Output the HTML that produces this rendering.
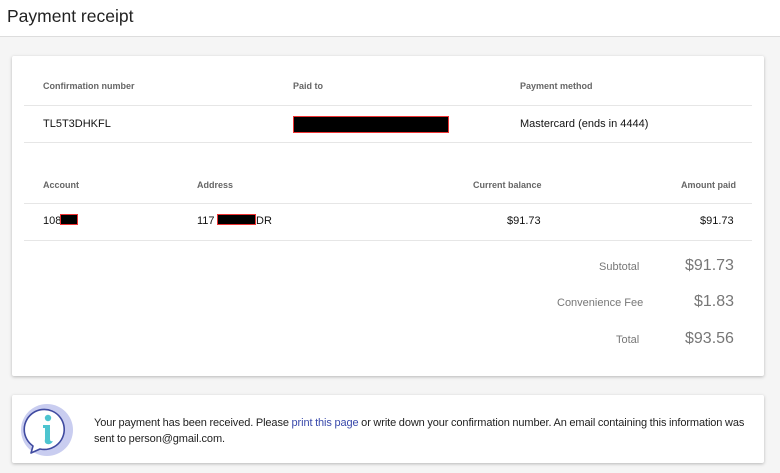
<!DOCTYPE html>
<html><head><style>
body{margin:0;width:780px;height:473px;background:#f5f5f5;font-family:"Liberation Sans",sans-serif;position:relative;overflow:hidden;color:#212121}
.hdr{position:absolute;left:0;top:0;width:780px;height:36px;background:#fff;border-bottom:1px solid #ddd}
.hdr span{position:absolute;left:7px;top:6px;font-size:17.5px;color:#222}
.card{position:absolute;left:12px;top:56px;width:752px;height:320px;background:#fff;box-shadow:0 1px 3px rgba(0,0,0,.25);border-radius:2px}
.t{position:absolute;white-space:nowrap}
.h{font-size:9px;font-weight:bold;color:#666}
.v{font-size:11px;color:#111}
.line{position:absolute;left:12px;width:728px;height:1px;background:#e6e6e6}
.red{position:absolute;background:#000;border:1px solid #e33}
.lbl{font-size:11px;color:#777}
.amt{font-size:16px;color:#777}
.info{position:absolute;left:12px;top:395px;width:752px;height:68px;background:#fff;box-shadow:0 1px 3px rgba(0,0,0,.25);border-radius:2px}
a{color:#3949ab;text-decoration:none}
</style></head><body>
<div class="hdr"><span>Payment receipt</span></div>
<div class="card">
<div class="t h" style="left:31px;top:25px">Confirmation number</div>
<div class="t h" style="left:281px;top:25px">Paid to</div>
<div class="t h" style="left:508px;top:25px">Payment method</div>
<div class="line" style="top:49px"></div>
<div class="t v" style="left:31px;top:62px">TL5T3DHKFL</div>
<div class="red" style="left:281px;top:60px;width:154px;height:15px"></div>
<div class="t v" style="left:508px;top:62px">Mastercard (ends in 4444)</div>
<div class="line" style="top:86px"></div>
<div class="t h" style="left:31px;top:124px">Account</div>
<div class="t h" style="left:185px;top:124px">Address</div>
<div class="t h" style="left:461px;top:124px">Current balance</div>
<div class="t h" style="left:669px;top:124px">Amount paid</div>
<div class="line" style="top:147px"></div>
<div class="t v" style="left:31px;top:159px">108</div>
<div class="red" style="left:48px;top:158px;width:16px;height:9px"></div>
<div class="t v" style="left:185px;top:159px">117</div>
<div class="red" style="left:205px;top:158px;width:37px;height:9px"></div>
<div class="t v" style="left:244px;top:159px">DR</div>
<div class="t v" style="left:495px;top:159px">$91.73</div>
<div class="t v" style="left:688px;top:159px">$91.73</div>
<div class="line" style="top:184px"></div>
<div class="t lbl" style="left:587px;top:205px">Subtotal</div>
<div class="t amt" style="left:673px;top:201px">$91.73</div>
<div class="t lbl" style="left:545px;top:241px">Convenience Fee</div>
<div class="t amt" style="left:682px;top:237px">$1.83</div>
<div class="t lbl" style="left:604px;top:278px">Total</div>
<div class="t amt" style="left:673px;top:274px">$93.56</div>
</div>
<div class="info">
<svg style="position:absolute;left:8px;top:8px" width="56" height="56" viewBox="0 0 56 56">
<circle cx="27" cy="27" r="26" fill="#c9cdf0"/>
<path d="M13 43 A20 20 0 1 1 20 46 L11 50 Z" fill="#fff" stroke="#3f4aa0" stroke-width="1.6" stroke-linejoin="round"/>
<circle cx="28" cy="15" r="3.2" fill="#4dc4cf"/>
<path d="M23 22 H30 V36 Q30 39 33 38 Q31 42 27 41 Q24 40 25 36 V25 H23 Z" fill="#4dc4cf"/>
</svg>
<div class="t v" style="left:82px;top:20px;font-size:11px;color:#222;line-height:16px;letter-spacing:-0.1px;word-spacing:-0.3px">Your payment has been received. Please <a>print this page</a> or write down your confirmation number. An email containing this information was<br>sent to person@gmail.com.</div>
</div>
</body></html>
